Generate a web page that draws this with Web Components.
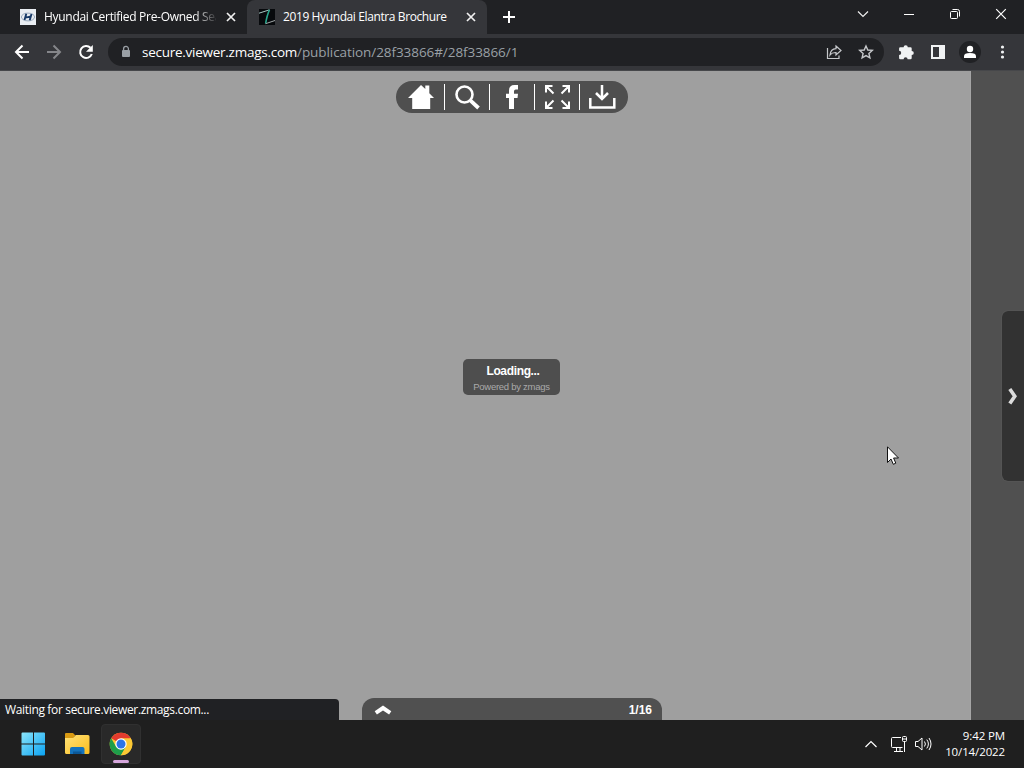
<!DOCTYPE html>
<html lang="en">
<head>
<meta charset="utf-8">
<title>2019 Hyundai Elantra Brochure</title>
<style>
    html, body {
        margin: 0;
        height: 100%;
        overflow: hidden;
        background: #1f1f1f;
    }

    body {
        font-family: "Open Sans", "Noto Sans", sans-serif;
        color: #fff;
    }
</style>
</head>
<body>
<desktop-screen>
    <tab-strip slot="window">
        <browser-tab style="--text-spacing: -0.3px">
            <svg slot="icon" width="16" height="16" viewBox="0 0 16 16">
                <rect width="16" height="16" fill="#e9edf2"/>
                <ellipse cx="8" cy="8" rx="6.6" ry="3.9" fill="none" stroke="#8fa0b6" stroke-width=".9"/>
                <path d="M6.3 4.7 4.5 11M11.5 5 9.7 11.3M5.3 8.6Q8 8.4 10.8 7.4" fill="none" stroke="#163866" stroke-width="1.9"/>
            </svg>
            Hyundai Certified Pre-Owned Sear
        </browser-tab>
        <browser-tab active style="--text-spacing: -0.39px">
            <svg slot="icon" width="16" height="16" viewBox="0 0 16 16">
                <rect width="16" height="16" fill="#07090c"/>
                <path d="M0 4.2 10.5.8" stroke="#a8c8c4" fill="none"/>
                <path d="M10.5.8Q8 6 6.6 14.7" stroke="#28a58c" stroke-width="1.6" fill="none"/>
                <path d="M6.6 14.7 16 11.5" stroke="#a3a9aa" fill="none"/>
            </svg>
            2019 Hyundai Elantra Brochure
        </browser-tab>
    </tab-strip>
    <address-bar slot="window" host="secure.viewer.zmags.com" path="/publication/28f33866#/28f33866/1"></address-bar>
    <zmags-viewer slot="window">
        <viewer-tools slot="tools"></viewer-tools>
        <loading-box slot="loading">
            Loading...
            <span slot="note">Powered by zmags</span>
        </loading-box>
        <page-bar slot="pages">1/16</page-bar>
        <status-bubble slot="status">Waiting for secure.viewer.zmags.com...</status-bubble>
    </zmags-viewer>
    <task-bar slot="taskbar">
        <span slot="time">9:42 PM</span>
        <span slot="date">10/14/2022</span>
    </task-bar>
    <mouse-pointer slot="pointer"></mouse-pointer>
</desktop-screen>

<script>
function define(name, html) {
    const template = document.createElement('template');
    template.innerHTML = html;
    customElements.define(name, class extends HTMLElement {
        constructor() {
            super();
            this.attachShadow({ mode: 'open' }).appendChild(template.content.cloneNode(true));
        }

        // elements with class "attr" show the attribute named in data-attr
        connectedCallback() {
            this.shadowRoot.querySelectorAll('.attr').forEach((el) => {
                el.textContent = this.getAttribute(el.dataset.attr);
            });
        }
    });
}

define('desktop-screen', `
    <style>
    :host {
        display: grid;
        grid-template-rows: 720px 48px;
        width: 1024px;
        height: 768px;
        position: relative;
        overflow: hidden;
    }

    .window {
        display: flex;
        flex-direction: column;
        min-height: 0;
    }
    </style>
    <div class="window"><slot name="window"></slot></div>
    <slot name="taskbar"></slot>
    <slot name="pointer"></slot>
`);

define('tab-strip', `
    <style>
    :host {
        display: flex;
        height: 34px;
        box-sizing: border-box;
        padding-left: 8px;
        background: #202124;
    }

    .plus {
        margin: 9px 0 0 14px;
    }

    .controls {
        display: flex;
        margin-left: auto;
    }

    .controls svg {
        width: 46px;
        height: 30px;
        fill: none;
        stroke: #fff;
    }
    </style>
    <slot></slot>
    <svg class="plus" width="16" height="16" viewBox="0 0 16 16" fill="none" stroke="#fff" stroke-width="2"><path d="M8 2v12M2 8h12"/></svg>
    <div class="controls">
        <svg viewBox="0 0 46 30"><path d="m18 11.5 5 5 5-5" stroke="#eee" stroke-width="1.2"/></svg>
        <svg viewBox="0 0 46 30"><path d="M18 14.5h10"/></svg>
        <svg viewBox="0 0 46 30"><rect x="18.5" y="11.5" width="7" height="7" rx="1"/><path d="M20.5 9.5h5a2 2 0 0 1 2 2v5"/></svg>
        <svg viewBox="0 0 46 30"><path d="m18.2 9.2 9.6 9.6m0-9.6-9.6 9.6" stroke-width="1.2"/></svg>
    </div>
`);

define('browser-tab', `
    <style>
    :host {
        display: flex;
        align-items: center;
        width: 239px;
        height: 34px;
        box-sizing: border-box;
        padding: 0 8px 0 12px;
        font-size: 12px;
        letter-spacing: var(--text-spacing, 0);
    }

    :host([active]) {
        background: #35363a;
        border-radius: 8px 8px 0 0;
        width: 240px;
    }

    .title {
        width: 174px;
        margin-left: 8px;
        overflow: hidden;
        white-space: nowrap;
        line-height: 20px;
        -webkit-mask-image: linear-gradient(90deg, #000 150px, transparent 174px);
        mask-image: linear-gradient(90deg, #000 150px, transparent 174px);
    }

    :host([active]) .title {
        -webkit-mask-image: none;
        mask-image: none;
    }

    .close {
        margin-left: 6px;
        flex: none;
    }

    :host(:not([active])) .close {
        margin-left: 7px;
    }

    ::slotted(svg) {
        flex: none;
    }
    </style>
    <slot name="icon"></slot>
    <div class="title"><slot></slot></div>
    <svg class="close" width="16" height="16" viewBox="0 0 16 16" fill="none" stroke="#f1f1f1" stroke-width="1.7"><path d="m4 4 8 8m0-8-8 8"/></svg>
`);

define('address-bar', `
    <style>
    :host {
        display: flex;
        align-items: center;
        height: 37px;
        box-sizing: border-box;
        padding: 0 6px;
        background: #35363a;
        border-bottom: 1px solid #46474a;
    }

    svg {
        width: 32px;
        height: 28px;
        flex: none;
    }

    .box {
        display: flex;
        align-items: center;
        flex: 1;
        height: 28px;
        margin: 0 6px;
        padding: 0 2px;
        border-radius: 14px;
        background: #202124;
    }

    .url {
        flex: 1;
        font-size: 13.5px;
        line-height: 20px;
        letter-spacing: -0.26px;
        white-space: nowrap;
    }

    .path {
        color: #9aa0a6;
        letter-spacing: -0.07px;
    }
    </style>
    <svg viewBox="-16 -14 32 28" fill="none" stroke="#fff" stroke-width="2"><path d="M7 0H-6M.5-6.5-6 0 .5 6.5"/></svg>
    <svg viewBox="-16 -14 32 28" fill="none" stroke="#85868a" stroke-width="2"><path d="M-7 0H6M-.5-6.5 6 0-.5 6.5"/></svg>
    <svg viewBox="-16 -14 32 28" fill="none" stroke="#fff" stroke-width="2"><path d="M4.5-4.2A6 6 0 1 0 5.8 2"/><path d="M6.8-7v6.8H0Z" fill="#fff" stroke="none"/></svg>
    <div class="box">
        <svg viewBox="-16 -14 32 28"><rect x="-4" y="-2" width="8" height="7" rx="1" fill="#9aa0a6"/><path d="M-2.4-1.5v-1.7a2.4 2.4 0 0 1 4.8 0v1.7" fill="none" stroke="#9aa0a6" stroke-width="1.3"/></svg>
        <div class="url"><span class="attr" data-attr="host"></span><span class="attr path" data-attr="path"></span></div>
        <svg viewBox="-16 -14 32 28" fill="none" stroke="#c6c8cb" stroke-width="1.2"><path d="M-6.500-4V6.500H5V3.500"/><path d="M2-6 7-1.500 2 3V.500Q-2 .300-4 3 -3.300-3 2-3.300Z"/></svg>
        <svg viewBox="-16 -14 32 28" fill="none" stroke="#c6c8cb" stroke-width="1.4"><path d="m0-6 1.800 4 4.500.400-3.400 3 1 4.500L0 3.600l-3.900 2.300 1-4.500-3.400-3 4.500-.400Z"/></svg>
    </div>
    <svg viewBox="-16 -14 32 28" fill="#f1f3f4"><path d="M-5.700-4.700h3.300a2.100 2.100 0 0 1 4.200 0h2.700q1.200 0 1.200 1.200v2.400a2.100 2.100 0 0 1 0 4.200v3q0 1.200-1.200 1.200H1.600a2 2 0 0 0-4 0h-3.300q-1.200 0-1.200-1.200V3a2.100 2.100 0 0 0 0-4.200v-2.300q0-1.200 1.200-1.200Z"/></svg>
    <svg viewBox="-16 -14 32 28"><path d="M-7-7H7V7H-7ZM-5-5V5H1V-5Z" fill="#f1f3f4" fill-rule="evenodd"/></svg>
    <svg viewBox="-16 -14 32 28"><circle r="11" fill="#202124"/><circle cy="-3" r="3.2" fill="#fff"/><path d="M-6 6V4.300Q-6 1 0 1T6 4.300V6Z" fill="#fff"/></svg>
    <svg viewBox="-16 -14 32 28" fill="#f1f3f4"><circle cx=".5" cy="-5" r="1.600"/><circle cx=".5" r="1.600"/><circle cx=".5" cy="5" r="1.600"/></svg>
`);

define('zmags-viewer', `
    <style>
    :host {
        display: grid;
        grid-template-columns: 971px 53px;
        height: 649px;
        position: relative;
        background: #9f9f9f;
    }

    .side {
        grid-column: 2;
        display: flex;
        align-items: center;
        justify-content: flex-end;
        background: #505050;
        box-shadow: -1px 0 #a5a5a5;
    }

    .next {
        display: flex;
        align-items: center;
        width: 22px;
        height: 170px;
        border-radius: 6px 0 0 6px;
        background: #323232;
        box-shadow: 0 0 1px #777;
    }

    /* controls floating over the page */
    ::slotted(*) {
        position: absolute;
    }

    ::slotted([slot=tools]) {
        top: 10px;
        left: 396px;
    }

    ::slotted([slot=loading]) {
        top: 288px;
        left: 463px;
    }

    ::slotted([slot=pages]) {
        bottom: 0;
        left: 362px;
    }

    ::slotted([slot=status]) {
        bottom: 0;
        left: 0;
    }
    </style>
    <div class="side">
        <div class="next">
            <svg width="22" height="22" viewBox="0 0 22 22" fill="none" stroke="#dcdcdc" stroke-width="3.600"><path d="m7.800 4 5 7.300-5 7.300"/></svg>
        </div>
    </div>
    <slot name="tools"></slot>
    <slot name="loading"></slot>
    <slot name="pages"></slot>
    <slot name="status"></slot>
`);

define('viewer-tools', `
    <style>
    :host {
        display: grid;
        grid-template-columns: 48px repeat(3, 45px) 49px;
        width: 232px;
        height: 32px;
        align-items: center;
        border-radius: 16px;
        background: #4f4f4f;
    }

    div {
        height: 26px;
        border-left: 1px solid #fff;
    }

    div:first-of-type {
        border: 0;
        padding-left: 3px;
    }

    svg {
        display: block;
        width: 44px;
        height: 26px;
        fill: none;
        stroke: #fff;
    }
    </style>
    <div><svg viewBox="-22 -13 44 26"><path d="M-13 1 0-12l4.300 4.100V-11.500h4v7.700L13 1H9.200V12h-18V1Z" fill="#fff" stroke="none"/></svg></div>
    <div><svg viewBox="-22 -13 44 26"><circle cx="-2.500" cy="-2.500" r="8" stroke-width="2.600"/><path d="m3.300 3.300 8.200 7.700" stroke-width="3.800"/></svg></div>
    <div><svg viewBox="-22 -13 44 26"><path d="M-3 12V1h-3v-4.300h3v-3.200Q-3-12 2.500-12H6v4.400H3.800Q2-7.600 2-5.800v2.500h4L5.500 1H2v11Z" fill="#fff" stroke="none"/></svg></div>
    <div><svg viewBox="-22 -13 44 26" stroke-width="2"><path d="M-4.500-11H-11v6.500m0-6.500 7.500 7.500M5.500-11H12v6.500m0-6.500L4.500-3.500M-4.500 11H-11V4.500m0 6.500 7.500-7.500M5.500 11H12V4.500m0 6.500L4.500 3.500"/></svg></div>
    <div><svg viewBox="-22 -13 44 26" stroke-width="2.500"><path d="M0-12V2m-6-6L0 2l6-6M-11.700 1v9.500h24V1"/></svg></div>
`);

define('loading-box', `
    <style>
    :host {
        display: flex;
        flex-direction: column;
        align-items: center;
        width: 97px;
        height: 36px;
        box-sizing: border-box;
        padding: 4px 0 0;
        border-radius: 5px;
        background: #4e4e4e;
        font-family: "Liberation Sans", Arial, sans-serif;
    }

    .title {
        font-size: 12px;
        line-height: 16px;
        font-weight: bold;
        letter-spacing: -0.35px;
        padding-left: 3px;
    }

    .note {
        font-size: 9.5px;
        line-height: 16px;
        letter-spacing: -0.27px;
        color: #aaa;
        white-space: nowrap;
    }
    </style>
    <div class="title"><slot></slot></div>
    <div class="note"><slot name="note"></slot></div>
`);

define('page-bar', `
    <style>
    :host {
        display: flex;
        align-items: center;
        justify-content: space-between;
        width: 300px;
        height: 22px;
        box-sizing: border-box;
        padding: 1px 10px 0 12px;
        border-radius: 12px 12px 0 0;
        background: #505050;
        font: bold 12px "Liberation Sans", Arial, sans-serif;
    }
    </style>
    <svg width="18" height="12" viewBox="0 0 18 12" fill="none" stroke="#fff" stroke-width="4"><path d="M1.800 8.900 9 4l7.200 4.900"/></svg>
    <slot></slot>
`);

define('status-bubble', `
    <style>
    :host {
        display: block;
        width: 339px;
        height: 21px;
        box-sizing: border-box;
        padding-left: 5px;
        border-radius: 0 4px 0 0;
        background: #202124;
        font-size: 12px;
        line-height: 21px;
        letter-spacing: -0.34px;
        white-space: nowrap;
    }
    </style>
    <slot></slot>
`);

define('task-bar', `
    <style>
    :host {
        display: flex;
        justify-content: space-between;
        background: #1f1f1f;
    }

    .apps {
        display: flex;
        align-items: center;
        gap: 4px;
        padding-left: 13px;
    }

    .apps div {
        display: flex;
        align-items: center;
        justify-content: center;
        width: 40px;
        height: 40px;
        box-sizing: border-box;
        border-radius: 4px;
        position: relative;
    }

    .apps div:first-child {
        padding-right: 1px;
    }

    .apps .open {
        background: #292929;
        border: 1px solid #303030;
    }

    .open::after {
        content: "";
        position: absolute;
        bottom: 0;
        left: 11px;
        width: 16px;
        height: 3px;
        border-radius: 2px;
        background: #d5a6dc;
    }

    .tray {
        display: flex;
        align-items: center;
        padding-right: 19px;
    }

    .tray svg {
        fill: none;
        stroke: #fff;
    }

    .clock {
        width: 64px;
        margin-left: 9px;
        display: flex;
        flex-direction: column;
        align-items: flex-end;
        font-size: 11.5px;
        line-height: 16px;
        letter-spacing: -0.12px;
        white-space: nowrap;
    }
    </style>
    <div class="apps">
        <div>
            <svg width="24" height="24" viewBox="0 0 24 24">
                <linearGradient id="win" x2="1" y2="1"><stop stop-color="#8be5fb"/><stop offset="1" stop-color="#0aa2f2"/></linearGradient>
                <path d="M1.500.500H12v11H.500v-10a1 1 0 0 1 1-1ZM13 .500h10a1 1 0 0 1 1 1v10H13ZM.500 12.500H12v11H1.500a1 1 0 0 1-1-1ZM13 12.500h11v10a1 1 0 0 1-1 1H13Z" fill="url(#win)"/>
            </svg>
        </div>
        <div>
            <svg width="26" height="24" viewBox="0 0 26 24">
                <linearGradient id="dir" x2="1" y2="1"><stop stop-color="#ffe27a"/><stop offset="1" stop-color="#fbbd1c"/></linearGradient>
                <path d="M1 2q0-1 1-1h7l3 3h-1L8 8H1Z" fill="#d99a12"/>
                <path d="M1 6h8l3-3h12q1.500 0 1.500 1.500v16Q25.500 22 24 22H2.500Q1 22 1 20.500Z" fill="url(#dir)"/>
                <path d="M6 22v-5q0-2 2-2h10.500q2 0 2 2v5Z" fill="#1473bd"/>
                <path d="M9 22v-2.500h8.500V22Z" fill="#0b5796"/>
            </svg>
        </div>
        <div class="open">
            <svg width="24" height="24" viewBox="-12 -12 24 24">
                <circle r="11.300" fill="#fcc934"/>
                <path d="M0 0-9.800-5.650A11.300 11.300 0 0 1 9.800-5.650Z" fill="#e33b2e"/>
                <path d="M-9.800-5.650A11.300 11.300 0 0 0 0 11.300L4.900 2.800-4.900 2.800Z" fill="#1e9e4a"/>
                <path d="M0-5.650H9.800A11.300 11.300 0 0 1 0 11.300L4.900 2.800Z" fill="#fcc934"/>
                <circle r="5.700" fill="#fff"/>
                <circle r="4.500" fill="#2b74e8"/>
            </svg>
        </div>
    </div>
    <div class="tray">
        <svg width="14" height="14" viewBox="0 0 14 14" stroke-width="1.200"><path d="m1.500 10 5.500-5.500 5.500 5.500"/></svg>
        <svg width="18" height="18" viewBox="0 0 18 18" style="margin-left: 12px"><path d="M11 2.500H2.500q-1 0-1 1v8q0 1 1 1h10M4 16.500h9M6.500 12.500v4M10 12.500v4M14.500 7v10"/><rect x="12.500" y="1.500" width="4" height="5" rx="1"/><path d="M12.500 4h4"/></svg>
        <svg width="18" height="18" viewBox="0 0 18 18" style="margin-left: 6px"><path d="M1.500 6.500H4l4-3.500v12l-4-3.500H1.500ZM10.500 6.500q1.800 2.500 0 5M12.800 4.600q3.200 4.400 0 8.800M15 3q4 6 0 12"/></svg>
        <div class="clock"><slot name="time"></slot><slot name="date"></slot></div>
    </div>
`);

define('mouse-pointer', `
    <style>
    :host {
        display: block;
        position: absolute;
        left: 887px;
        top: 446px;
        width: 12px;
        height: 19px;
    }

    svg {
        display: block;
    }
    </style>
    <svg width="12" height="19" viewBox="0 0 12 19"><path d="M.500.800v15.700L4 13l2.300 5.300 2.500-1.100L6.600 12h4.900Z" fill="#fff" stroke="#111"/></svg>
`);
</script>
</body>
</html>
